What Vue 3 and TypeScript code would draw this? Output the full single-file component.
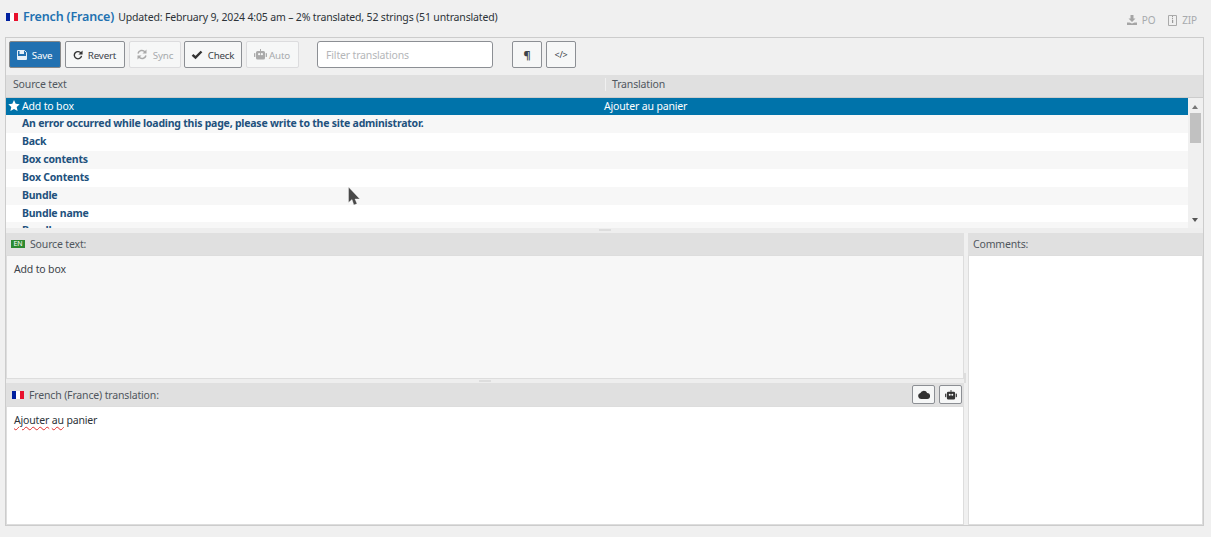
<script setup lang="ts">
const rows: string[] = [
  'An error occurred while loading this page, please write to the site administrator.',
  'Back',
  'Box contents',
  'Box Contents',
  'Bundle',
  'Bundle name',
  'Bundle',
]
const robot =
  'M6 0h1v2h2.500a1.500 1.500 0 0 1 1.500 1.500v5.500a1.500 1.500 0 0 1-1.500 1.500h-6A1.500 1.500 0 0 1 2 9V3.500A1.500 1.500 0 0 1 3.500 2H6zM4 5.200a1.100 1.100 0 1 0 2.200 0 1.100 1.100 0 0 0-2.200 0zM6.800 5.200a1.100 1.100 0 1 0 2.200 0 1.100 1.100 0 0 0-2.200 0zM0 5a1 1 0 0 1 1.300-1v4A1 1 0 0 1 0 7zM11.700 4a1 1 0 0 1 1.300 1v2a1 1 0 0 1-1.300 1z'
</script>

<template>
  <div class="page">
    <header class="top">
      <div class="heading">
        <svg class="flag" width="12" height="8" viewBox="0 0 12 8"><rect width="4" height="8" fill="#00209f" /><rect x="4" width="4" height="8" fill="#fff" /><rect x="8" width="4" height="8" fill="#e8112d" /></svg>
        <a class="lang">French (France)</a>
        <span class="meta">Updated: February 9, 2024 4:05 am – 2% translated, 52 strings (51 untranslated)</span>
      </div>
      <div class="downloads">
        <span class="dl">
          <svg width="10" height="10" viewBox="0 0 10 10"><path d="M3.500 0h3v3.500H8.500L5 7 1.500 3.500h2zM0 7.500h2.500L5 8.500l2.500-1H10V10H0z" fill="#a5a5a5" /></svg>
          PO
        </span>
        <span class="dl">
          <svg width="9" height="11" viewBox="0 0 9 11"><path d="M.5.5h8v10h-8z" fill="none" stroke="#aaa" /><path d="M4 1h1v1.200H4zM4 3h1v1.200H4zM4 5h1.200v3H4z" fill="#999" /></svg>
          ZIP
        </span>
      </div>
    </header>

    <section class="editor">
      <div class="toolbar">
        <button class="btn primary w52">
          <svg width="10" height="10" viewBox="0 0 10 10"><path d="M.5.5h7l2 2v7h-9z" fill="none" stroke="#e8f0f7" /><path d="M2.500 1v3h4.500V1zM1 6h8v3.500H1z" fill="#e8f0f7" /></svg>
          <span>Save</span>
        </button>
        <button class="btn w60">
          <svg width="10" height="10" viewBox="0 0 11 11"><path d="M8.800 3.500A4 4 0 1 0 9.400 6.500" fill="none" stroke="#333" stroke-width="1.500" /><path d="M10.500 .5v4.500H6z" fill="#333" /></svg>
          <span>Revert</span>
        </button>
        <button class="btn off w52">
          <svg width="12" height="11" viewBox="0 0 12 11"><path d="M2 4.500A4 4 0 0 1 9 3M10 6.500A4 4 0 0 1 3 8" fill="none" stroke="#aaa" stroke-width="1.500" /><path d="M10.500 .5v4H6.500zM1.500 10.500v-4h4z" fill="#aaa" /></svg>
          <span>Sync</span>
        </button>
        <button class="btn w58 tight">
          <svg width="12" height="10" viewBox="0 0 12 10"><path d="M1.500 4.800l3 2.700 6-6" fill="none" stroke="#333" stroke-width="2.400" /></svg>
          <span>Check</span>
        </button>
        <button class="btn off w53">
          <svg width="13" height="11" viewBox="0 0 13 11"><path :d="robot" fill="#aaa" fill-rule="evenodd" /></svg>
          <span class="nogap">Auto</span>
        </button>
        <input class="filter" type="text" placeholder="Filter translations" />
        <button class="btn square pilcrow">¶</button>
        <button class="btn square code">&lt;/&gt;</button>
      </div>

      <div class="columns">
        <div class="col-source">Source text</div>
        <div class="col-trans">Translation</div>
      </div>

      <div class="list">
        <div class="rows">
          <div class="row selected">
            <svg class="star" width="12" height="11" viewBox="0 0 12 11"><path d="M6 0l1.700 3.700 4 .5-3 2.700.9 4L6 8.900 2.400 10.900l.9-4-3-2.700 4-.5z" fill="#fff" /></svg>
            <span class="src plain">Add to box</span>
            <span class="dst">Ajouter au panier</span>
          </div>
          <div v-for="(r, i) in rows" :key="i" class="row" :class="{ odd: i % 2 === 0 }">
            <span class="src">{{ r }}</span>
          </div>
        </div>
        <div class="scrollbar">
          <span class="arrow up"></span>
          <span class="thumb"></span>
          <span class="arrow down"></span>
        </div>
      </div>

      <div class="split-h"><i class="grip"></i></div>

      <div class="panes">
        <div class="main-pane">
          <div class="pane-head">
            <span class="en">EN</span>
            <span>Source text:</span>
          </div>
          <div class="source-body">Add to box</div>
          <div class="split-h inner"><i class="grip"></i></div>
          <div class="pane-head trans-head">
            <svg class="flag nudge" width="12" height="8" viewBox="0 0 12 8"><rect width="4" height="8" fill="#00209f" /><rect x="4" width="4" height="8" fill="#fff" /><rect x="8" width="4" height="8" fill="#e8112d" /></svg>
            <span>French (France) translation:</span>
            <div class="head-btns">
              <button class="mini">
                <svg width="12" height="9" viewBox="0 0 12 9"><path d="M3 9a3 3 0 0 1-.6-5.900A3.600 3.600 0 0 1 9.200 3 3 3 0 0 1 9 9z" fill="#333" /></svg>
              </button>
              <button class="mini">
                <svg width="12" height="10" viewBox="0 0 13 11"><path :d="robot" fill="#333" fill-rule="evenodd" /></svg>
              </button>
            </div>
          </div>
          <div class="trans-body"><span class="misspelt">Ajouter</span> <span class="misspelt">au</span> panier</div>
        </div>
        <div class="split-v"><i class="grip-v"></i></div>
        <div class="side-pane">
          <div class="pane-head">Comments:</div>
          <div class="comments"></div>
        </div>
      </div>
    </section>

    <svg class="cursor" width="14" height="21" viewBox="0 0 14 21"><path d="M1.500 1v15.500l3.500-3 1.800 5.500 3.200-1.200-2-4.800h4.800z" fill="#484848" stroke="#fff" stroke-opacity=".45" stroke-width=".8" /></svg>
  </div>
</template>

<style>
html, body { margin: 0; background: #f0f0f0; }
</style>

<style scoped>
.page {
  position: relative;
  box-sizing: border-box;
  width: 1211px;
  height: 537px;
  padding: 0 7px 11px 5px;
  display: flex;
  flex-direction: column;
  background: #f0f0f0;
  font-family: "Noto Sans", "Open Sans", sans-serif;
  font-size: 10.5px;
  letter-spacing: -0.16px;
  color: #3c434a;
  overflow: hidden;
}
.top {
  height: 37px;
  flex: none;
  display: flex;
  justify-content: space-between;
  box-sizing: border-box;
}
.heading { display: flex; align-items: center; height: 33px; padding-left: 1px; }
.flag { flex: none; display: block; }
.nudge { margin-left: 1px; }
.lang { color: #2271b1; font-size: 12.500px; font-weight: 600; margin-left: 5px; }
.meta { margin-left: 4px; color: #2c3338; }
.downloads { display: flex; gap: 13px; padding: 14px 7px 0 0; color: #a7aaad; font-size: 10px; }
.dl { display: flex; align-items: center; gap: 5px; height: 12px; }
.editor {
  flex: 1;
  min-height: 0;
  display: flex;
  flex-direction: column;
  border: 1px solid #ccc;
  box-sizing: border-box;
}
.toolbar { height: 37px; flex: none; box-sizing: border-box; padding: 3px 0 0 3px; display: flex; }
.btn {
  box-sizing: border-box;
  height: 27px;
  margin-right: 4px;
  display: flex;
  align-items: center;
  justify-content: center;
  gap: 6px;
  border: 1px solid #8c8f94;
  border-radius: 2px;
  background: #f6f7f7;
  color: #3c434a;
  font-family: inherit;
  font-size: 9.800px;
  letter-spacing: -0.2px;
  padding: 0;
}
.btn span { transform: translate(-1px, 1px); }
.w52 { width: 52px; }
.w60 { width: 60px; }
.w58 { width: 58px; }
.w53 { width: 53px; }
.tight { margin-left: -1px; }
.nogap { margin-left: -3px; }
.primary { background: #2271b1; border-color: #888; color: #fff; }
.off { border-color: #dcdcde; color: #a7aaad; }
.filter {
  box-sizing: border-box;
  width: 176px;
  height: 27px;
  margin: 0 19px 0 14px;
  padding: 0 8px;
  border: 1px solid #8c8f94;
  border-radius: 3px;
  background: #fff;
  font-family: inherit;
  font-size: 10.500px;
  letter-spacing: -0.16px;
}
.filter::placeholder { color: #b4b6b9; opacity: 1; }
.square { width: 30px; }
.pilcrow { font-weight: 700; font-size: 11px; }
.code { font-size: 9px; }
.columns {
  height: 23px;
  flex: none;
  display: flex;
  align-items: center;
  box-sizing: border-box;
  padding-bottom: 3px;
  background: #e0e0e0;
  border-bottom: 1px solid #ccc;
  color: #50575e;
}
.col-source { width: 599px; padding-left: 7px; box-sizing: border-box; line-height: 13px; }
.col-trans { padding-left: 6px; border-left: 1px solid #f0f0f0; line-height: 13px; }
.list { height: 130px; flex: none; display: flex; overflow: hidden; }
.rows { flex: 1; min-width: 0; overflow: hidden; }
.row {
  height: 18px;
  box-sizing: border-box;
  padding-bottom: 2px;
  display: flex;
  align-items: center;
  flex: none;
  background: #fff;
  font-weight: 700;
  letter-spacing: -0.22px;
  color: #22517d;
  position: relative;
}
.row.odd { background: #f7f7f7; }
.row:nth-child(7) { height: 17px; }
.selected { height: 17px; background: #0073aa; color: #fff; font-weight: 400; letter-spacing: -0.16px; }
.star { position: absolute; left: 2px; top: 2px; }
.src { width: 582px; flex: none; margin-left: 16px; }
.scrollbar { width: 15px; flex: none; background: #f0f0f0; position: relative; }
.arrow { position: absolute; left: 4px; width: 0; height: 0; border: 3.500px solid transparent; }
.up { top: 7px; border-bottom: 4px solid #777; border-top: 0; }
.down { bottom: 6px; border-top: 4px solid #555; border-bottom: 0; }
.thumb { position: absolute; left: 2px; top: 15px; width: 11px; height: 30px; background: #c1c1c1; }
.split-h { height: 5px; flex: none; background: #eee; display: flex; justify-content: center; align-items: flex-start; }
.split-h .grip { width: 12px; height: 2px; background: #ddd; margin-top: 1px; }
.split-h.inner { height: 4px; }
.panes { flex: 1; min-height: 0; display: flex; }
.main-pane { width: 958px; flex: none; display: flex; flex-direction: column; }
.split-v { width: 4px; flex: none; background: #f0f0f0; display: flex; align-items: center; }
.grip-v { width: 2px; height: 10px; background: #ddd; margin-bottom: 2px; }
.side-pane { flex: 1; display: flex; flex-direction: column; }
.pane-head {
  height: 22px;
  flex: none;
  box-sizing: border-box;
  display: flex;
  align-items: center;
  gap: 5px;
  padding-left: 5px;
  background: #e0e0e0;
  color: #50575e;
}
.en {
  width: 14px;
  height: 8px;
  background: #2d8a32;
  color: #fff;
  font-size: 7px;
  letter-spacing: 0;
  line-height: 8px;
  text-align: center;
}
.source-body {
  height: 124px;
  flex: none;
  box-sizing: border-box;
  padding: 6px 7px;
  background: #f7f7f7;
  color: #3c434a;
  border: 1px solid #ddd;
}
.trans-head { height: 23px; }
.head-btns { margin-left: auto; display: flex; gap: 4px; padding-right: 2px; }
.mini {
  box-sizing: border-box;
  width: 23px;
  height: 19px;
  padding: 0;
  display: flex;
  align-items: center;
  justify-content: center;
  border: 1px solid #8c8f94;
  border-radius: 2px;
  background: #f6f7f7;
}
.trans-body {
  flex: 1;
  box-sizing: border-box;
  padding: 6px 7px;
  background: #fff;
  color: #2c3338;
  border: 1px solid #ddd;
}
.misspelt { text-decoration: underline wavy #e0302f 1px; text-underline-offset: 2px; }
.comments { flex: 1; background: #fff; border: 1px solid #ddd; }
.cursor { position: absolute; left: 347px; top: 186px; }
</style>
